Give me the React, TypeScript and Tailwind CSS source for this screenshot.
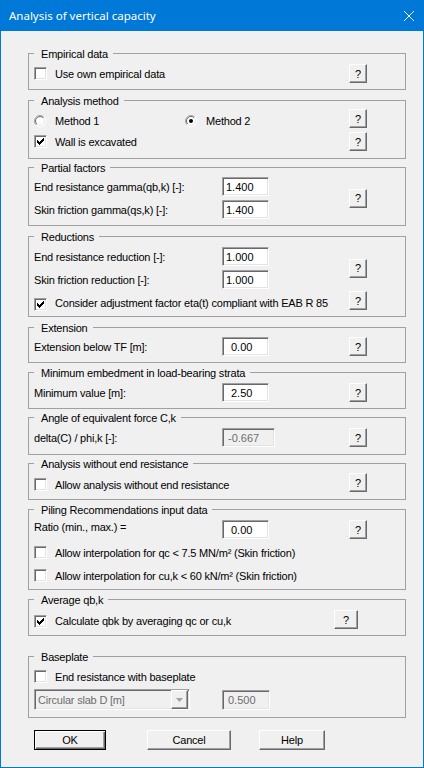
import type { ReactNode } from "react";

const sunken =
  "border border-t-[#a0a0a0] border-l-[#a0a0a0] border-r-white border-b-white shadow-[inset_1px_1px_0_#696969,inset_-1px_-1px_0_#e3e3e3]";
const raised =
  "border border-t-white border-l-white border-r-[#696969] border-b-[#696969] shadow-[inset_-1px_-1px_0_#a0a0a0]";

function Group({ title, className, children }: { title: string; className: string; children: ReactNode }) {
  return (
    <div className={`border border-[#a0a0a0] ${className}`}>
      <div className="-mt-[7px] ml-[5px] h-[14px] w-fit bg-[#f0f0f0] pl-[7px] pr-[5px]">{title}</div>
      {children}
    </div>
  );
}

function Check({ checked = false, className = "" }: { checked?: boolean; className?: string }) {
  return (
    <span className={`flex h-[13px] w-[13px] shrink-0 bg-white ${sunken} ${className}`}>
      {checked ? (
        <svg width="11" height="11" viewBox="0 0 11 11" shapeRendering="crispEdges">
          <rect x="8" y="2" width="1" height="1" fill="#000" />
          <rect x="7" y="3" width="2" height="1" fill="#000" />
          <rect x="2" y="4" width="1" height="1" fill="#000" />
          <rect x="6" y="4" width="3" height="1" fill="#000" />
          <rect x="2" y="5" width="2" height="1" fill="#000" />
          <rect x="5" y="5" width="3" height="1" fill="#000" />
          <rect x="2" y="6" width="5" height="1" fill="#000" />
          <rect x="3" y="7" width="3" height="1" fill="#000" />
          <rect x="4" y="8" width="1" height="1" fill="#000" />
        </svg>
      ) : null}
    </span>
  );
}

function Radio({ checked = false }: { checked?: boolean }) {
  return (
    <svg width="12" height="12" viewBox="0 0 12 12" className="shrink-0">
      <defs>
        <linearGradient id="ro" x1="0" y1="0" x2="1" y2="1">
          <stop offset="0.5" stopColor="#a0a0a0" />
          <stop offset="0.5" stopColor="#ffffff" />
        </linearGradient>
        <linearGradient id="ri" x1="0" y1="0" x2="1" y2="1">
          <stop offset="0.5" stopColor="#696969" />
          <stop offset="0.5" stopColor="#e3e3e3" />
        </linearGradient>
      </defs>
      <circle cx="6" cy="6" r="5.5" fill="#fff" stroke="url(#ro)" />
      <circle cx="6" cy="6" r="4.5" fill="#fff" stroke="url(#ri)" />
      {checked ? <circle cx="6" cy="6" r="2" fill="#000" /> : null}
    </svg>
  );
}

function Help({ className = "" }: { className?: string }) {
  return (
    <div className={`flex h-[19px] shrink-0 items-center justify-center ${raised} ${className}`}>?</div>
  );
}

function Field({ value, disabled = false, className }: { value: string; disabled?: boolean; className: string }) {
  return (
    <div
      className={`flex shrink-0 items-center tracking-normal ${sunken} ${
        disabled ? "bg-[#f0f0f0] text-[#6d6d6d]" : "bg-white text-black"
      } ${className}`}
    >
      {value}
    </div>
  );
}

function InputRow({ label, children }: { label: string; children: ReactNode }) {
  return (
    <div className="flex h-[19px] items-center">
      <span className="w-[188px]">{label}</span>
      {children}
    </div>
  );
}

export default function App() {
  return (
    <div className="h-[768px] w-[424px] overflow-hidden border border-[#0078d7] bg-[#f0f0f0] font-['Liberation_Sans',Arial,sans-serif] text-[11px] leading-[14px] tracking-[-0.2px] text-black">
      <div className="flex h-[30px] items-center justify-between bg-[#0078d7] pl-[8px] pr-[9px] text-white">
        <span className="font-['Noto_Sans',sans-serif] text-[11.5px] tracking-normal">Analysis of vertical capacity</span>
        <svg width="10" height="10" viewBox="0 0 10 10">
          <path d="M0 0L10 10M10 0L0 10" stroke="#fff" strokeWidth="1" />
        </svg>
      </div>

      <div className="ml-[27px] w-[378px]">
        <Group title="Empirical data" className="mt-[22px] h-[37px]">
          <div className="mt-[3px] flex h-[19px] items-center pl-[5px] pr-[38px]">
            <Check />
            <span className="ml-[8px]">Use own empirical data</span>
            <Help className="ml-auto w-[18px]" />
          </div>
        </Group>

        <Group title="Analysis method" className="mt-[10px] h-[59px]">
          <div className="mt-[1px] flex h-[19px] items-center pl-[5px] pr-[38px]">
            <div className="mt-[4px] flex items-center">
              <div className="flex w-[151px] items-center">
                <Radio />
                <span className="ml-[9px]">Method 1</span>
              </div>
              <Radio checked />
              <span className="ml-[9px]">Method 2</span>
            </div>
            <Help className="ml-auto w-[18px]" />
          </div>
          <div className="mt-[4px] flex h-[19px] items-center pl-[5px] pr-[38px]">
            <Check checked />
            <span className="ml-[8px]">Wall is excavated</span>
            <Help className="ml-auto w-[18px]" />
          </div>
        </Group>

        <Group title="Partial factors" className="mt-[8px] h-[59px]">
          <div className="mt-[2px] flex items-center pl-[5px] pr-[38px]">
            <div className="flex flex-col gap-[4px]">
              <InputRow label="End resistance gamma(qb,k) [-]:">
                <Field value="1.400" className="h-[19px] w-[47px] pl-[3px]" />
              </InputRow>
              <InputRow label="Skin friction gamma(qs,k) [-]:">
                <Field value="1.400" className="h-[19px] w-[47px] pl-[3px]" />
              </InputRow>
            </div>
            <Help className="ml-auto w-[18px]" />
          </div>
        </Group>

        <Group title="Reductions" className="mt-[10px] h-[81px]">
          <div className="mt-[3px] flex items-center pl-[5px] pr-[38px]">
            <div className="flex flex-col gap-[4px]">
              <InputRow label="End resistance reduction [-]:">
                <Field value="1.000" className="h-[19px] w-[47px] pl-[3px]" />
              </InputRow>
              <InputRow label="Skin friction reduction [-]:">
                <Field value="1.000" className="h-[19px] w-[47px] pl-[3px]" />
              </InputRow>
            </div>
            <Help className="ml-auto w-[18px]" />
          </div>
          <div className="mt-[2px] flex h-[19px] items-start pl-[5px] pr-[38px]">
            <Check checked className="mt-[7px]" />
            <span className="ml-[8px] mt-[5px]">Consider adjustment factor eta(t) compliant with EAB R 85</span>
            <Help className="ml-auto w-[18px]" />
          </div>
        </Group>

        <Group title="Extension" className="mt-[10px] h-[36px]">
          <div className="mt-[2px] flex h-[19px] items-center pl-[5px] pr-[38px]">
            <span className="w-[188px]">Extension below TF [m]:</span>
            <Field value="0.00" className="h-[19px] w-[47px] pl-[8px]" />
            <Help className="ml-auto w-[18px]" />
          </div>
        </Group>

        <Group title="Minimum embedment in load-bearing strata" className="mt-[9px] h-[37px]">
          <div className="mt-[3px] flex h-[19px] items-center pl-[5px] pr-[38px]">
            <span className="w-[188px]">Minimum value [m]:</span>
            <Field value="2.50" className="h-[19px] w-[47px] pl-[8px]" />
            <Help className="ml-auto w-[18px]" />
          </div>
        </Group>

        <Group title="Angle of equivalent force C,k" className="mt-[8px] h-[38px]">
          <div className="mt-[3px] flex h-[19px] items-center pl-[5px] pr-[38px]">
            <span className="w-[188px]">delta(C) / phi,k [-]:</span>
            <Field value="-0.667" disabled className="h-[19px] w-[53px] pl-[5px]" />
            <Help className="ml-auto w-[18px]" />
          </div>
        </Group>

        <Group title="Analysis without end resistance" className="mt-[8px] h-[37px]">
          <div className="mt-[2px] flex h-[19px] items-center pl-[5px] pr-[38px]">
            <div className="mt-[4px] flex items-center">
              <Check />
              <span className="ml-[8px]">Allow analysis without end resistance</span>
            </div>
            <Help className="ml-auto w-[18px]" />
          </div>
        </Group>

        <Group title="Piling Recommendations input data" className="mt-[9px] h-[81px]">
          <div className="mt-[3px] flex h-[19px] items-center pl-[5px] pr-[38px]">
            <span className="mb-[5px] w-[188px]">Ratio (min., max.) =</span>
            <Field value="0.00" className="h-[19px] w-[47px] pl-[8px]" />
            <Help className="ml-auto w-[18px]" />
          </div>
          <div className="mt-[4px] flex h-[19px] items-center pl-[5px]">
            <Check />
            <span className="ml-[8px]">Allow interpolation for qc &lt; 7.5 MN/m² (Skin friction)</span>
          </div>
          <div className="mt-[4px] flex h-[19px] items-center pl-[5px]">
            <Check />
            <span className="ml-[8px]">Allow interpolation for cu,k &lt; 60 kN/m² (Skin friction)</span>
          </div>
        </Group>

        <Group title="Average qb,k" className="mt-[9px] h-[37px]">
          <div className="mt-[3px] flex h-[19px] items-center pl-[5px] pr-[47px]">
            <div className="mt-[3px] flex items-center">
              <Check checked />
              <span className="ml-[8px]">Calculate qbk by averaging qc or cu,k</span>
            </div>
            <Help className="ml-auto w-[24px]" />
          </div>
        </Group>

        <Group title="Baseplate" className="mt-[20px] h-[62px]">
          <div className="mt-[3px] flex h-[19px] items-center pl-[5px]">
            <Check />
            <span className="ml-[8px]">End resistance with baseplate</span>
          </div>
          <div className="mt-[3px] flex items-start pl-[5px]">
            <div className={`flex h-[21px] w-[156px] bg-[#f0f0f0] ${sunken}`}>
              <span className="flex flex-1 items-center pl-[3px] text-[#6d6d6d]">Circular slab D [m]</span>
              <span className={`mr-[1px] flex w-[17px] items-center justify-center bg-[#f0f0f0] ${raised}`}>
                <svg width="7" height="4" viewBox="0 0 7 4">
                  <polygon points="0,0 7,0 3.5,4" fill="#a0a0a0" />
                </svg>
              </span>
            </div>
            <Field value="0.500" disabled className="ml-[32px] mt-[1px] h-[20px] w-[48px] pl-[5px]" />
          </div>
        </Group>
      </div>

      <div className="mt-[12px] flex pl-[33px]">
        <div className="flex h-[20px] w-[72px] items-center justify-center border border-black shadow-[inset_1px_1px_0_#fff,inset_-1px_-1px_0_#696969,inset_-2px_-2px_0_#a0a0a0]">
          OK
        </div>
        <div className={`ml-[41px] flex h-[20px] w-[84px] items-center justify-center ${raised}`}>Cancel</div>
        <div className={`ml-[28px] flex h-[20px] w-[66px] items-center justify-center ${raised}`}>Help</div>
      </div>
    </div>
  );
}
